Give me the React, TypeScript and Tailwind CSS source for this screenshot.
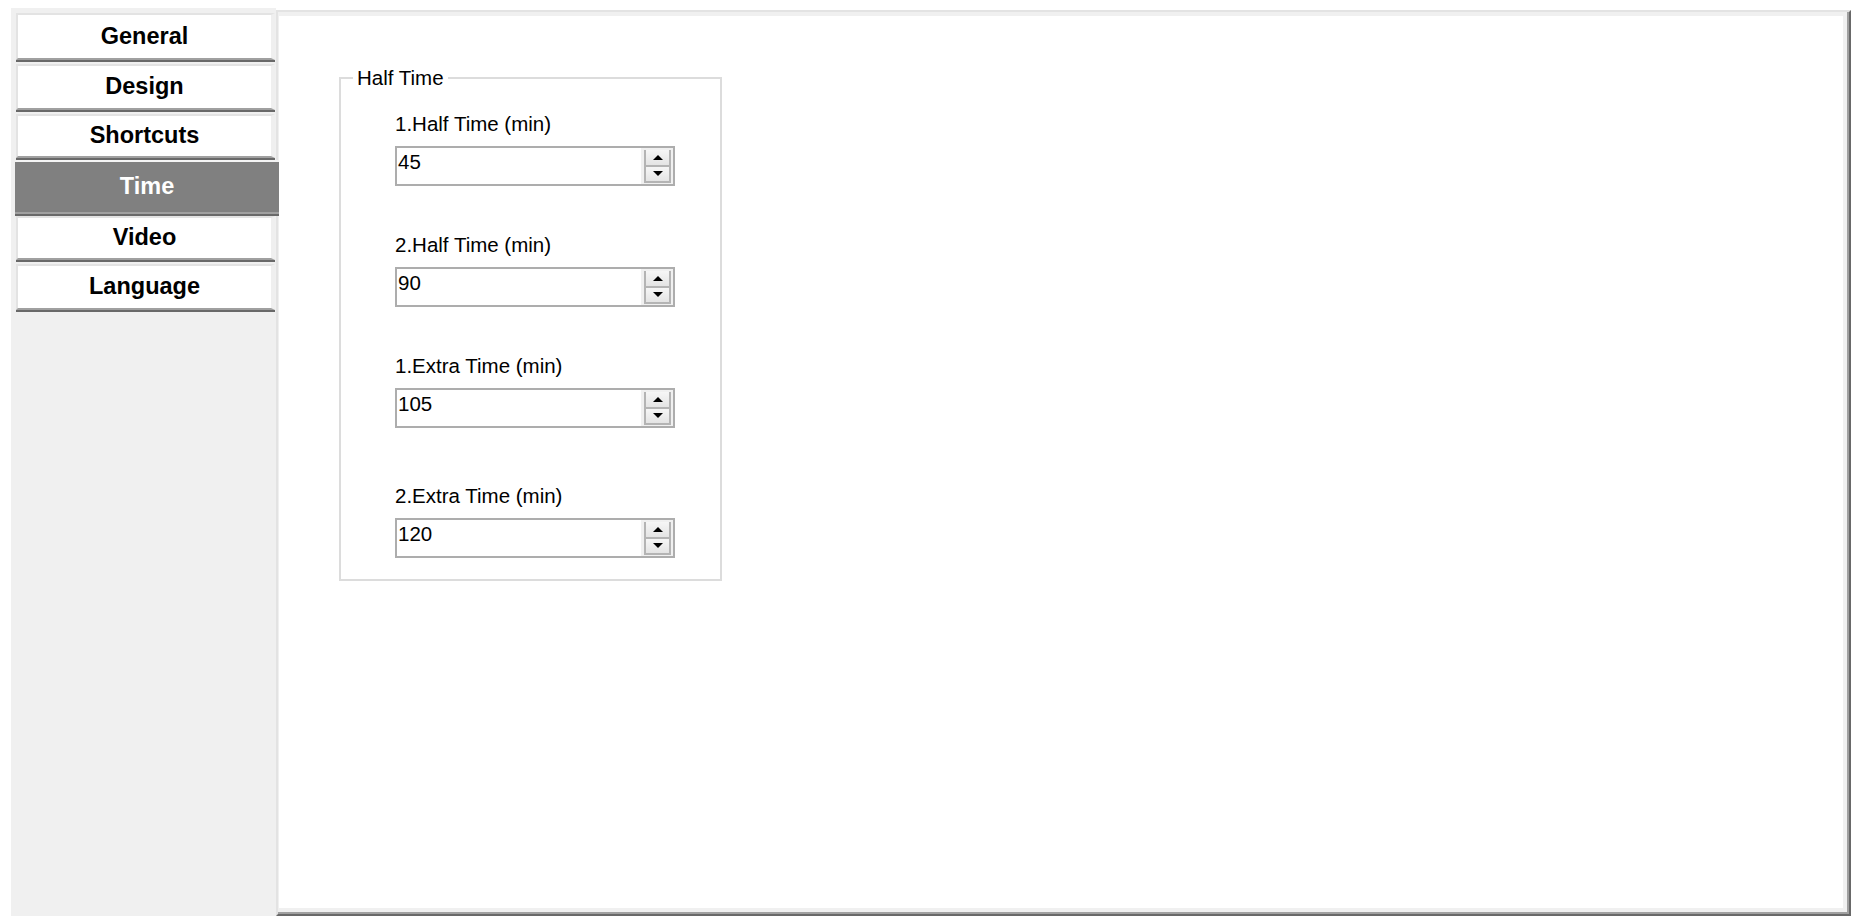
import React from "react";

const tabs = [
  { label: "General", h: "h-[49px]", gap: "mb-[2px]" },
  { label: "Design", h: "h-[48px]", gap: "mb-[2px]" },
  { label: "Shortcuts", h: "h-[46px]", gap: "" },
  { label: "Time", h: "h-[56px]", gap: "", active: true },
  { label: "Video", h: "h-[46px]", gap: "mb-[2px]" },
  { label: "Language", h: "h-[48px]", gap: "" },
];

const fields = [
  { label: "1.Half Time (min)", value: "45", mt: "" },
  { label: "2.Half Time (min)", value: "90", mt: "mt-[47px]" },
  { label: "1.Extra Time (min)", value: "105", mt: "mt-[47px]" },
  { label: "2.Extra Time (min)", value: "120", mt: "mt-[56px]" },
];

function Tab({ label, h, gap, active }: { label: string; h: string; gap: string; active?: boolean }) {
  if (active) {
    return (
      <div className={`${h} ${gap} relative z-10 -ml-[1px] -mr-[4px] border-b-2 border-[#696969] flex flex-col`}>
        <div className="flex-1 bg-[#808080] border-t-2 border-[#f4f4f4] border-b-2 border-b-[#a0a0a0] flex items-center justify-center text-white font-bold text-[23.5px]">
          {label}
        </div>
      </div>
    );
  }
  return (
    <div className={`${h} ${gap} border-b-2 border-[#696969] flex flex-col`}>
      <div className="flex-1 bg-white border-t-2 border-l-2 border-[#e3e3e3] border-r-4 border-r-[#efefef] border-b-2 border-b-[#a0a0a0] flex items-center justify-center text-black font-bold text-[23.5px]">
        {label}
      </div>
    </div>
  );
}

function Spinner() {
  return (
    <div className="w-[32px] h-full bg-[#f0f0f0] pt-[2px] pl-[3px] pr-[2px] pb-[1px] flex flex-col">
      <div className="flex-1 bg-gradient-to-b from-[#f6f6f6] to-[#e4e4e4] border-x-2 border-b border-[#b4b4b4] flex items-center justify-center">
        <svg width="10" height="5" viewBox="0 0 10 5">
          <polygon points="5,0 10,5 0,5" fill="#000" />
        </svg>
      </div>
      <div className="flex-1 bg-gradient-to-b from-[#f6f6f6] to-[#e4e4e4] border-x-2 border-b-2 border-t border-[#b4b4b4] flex items-center justify-center">
        <svg width="10" height="5" viewBox="0 0 10 5">
          <polygon points="0,0 10,0 5,5" fill="#000" />
        </svg>
      </div>
    </div>
  );
}

export default function App() {
  return (
    <div className="w-[1861px] h-[923px] bg-white pl-[11px] pt-[8px] flex items-start font-['Liberation_Sans',Arial,sans-serif]">
      {/* Left tab strip */}
      <div className="w-[265px] h-[908px] bg-[#f0f0f0] flex flex-col pt-[5px] pl-[5px] pr-[1px]">
        {tabs.map((t) => (
          <Tab key={t.label} {...t} />
        ))}
      </div>

      {/* Settings page */}
      <div className="mt-[2px] w-[1575px] h-[906px] border-t-2 border-l-2 border-[#e3e3e3] border-r-2 border-b-2 border-r-[#696969] border-b-[#696969] flex">
        <div className="flex-1 border-r-2 border-b-2 border-[#a0a0a0] flex">
          <div className="flex-1 bg-white border-t-4 border-r-4 border-b-4 border-l border-[#f0f0f0] pl-[60px] pt-[51px]">
            <fieldset className="w-[383px] h-[514px] border-2 border-[#dcdcdc] pl-[54px] pt-[23px]">
              <legend className="-ml-[42px] px-[4px] text-[20.5px] leading-[22px] text-black">Half Time</legend>
              {fields.map((f) => (
                <div key={f.label} className={f.mt}>
                  <div className="text-[20.5px] leading-[24px] text-black">{f.label}</div>
                  <div className="mt-[10px] w-[280px] h-[40px] border-2 border-[#adadad] flex">
                    <div className="flex-1 pl-[1px] pt-[2px] text-[20.5px] leading-[24px] text-black">{f.value}</div>
                    <Spinner />
                  </div>
                </div>
              ))}
            </fieldset>
          </div>
        </div>
      </div>
    </div>
  );
}
